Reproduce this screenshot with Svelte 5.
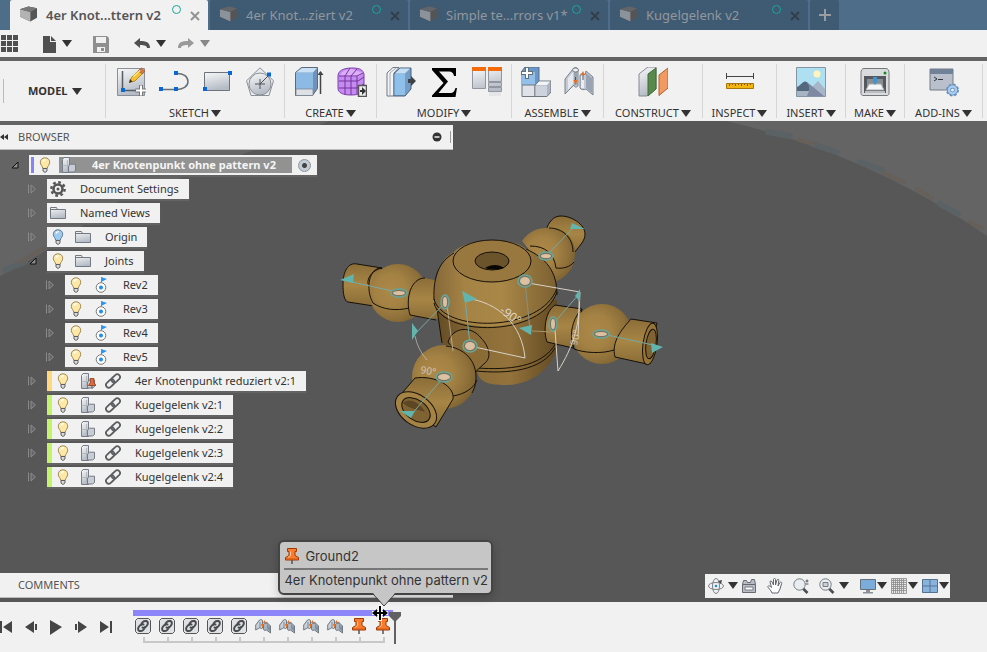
<script>
	const tabs = [
		{ title: '4er Knot...ttern v2' },
		{ title: '4er Knot...ziert v2' },
		{ title: 'Simple te...rrors v1*' },
		{ title: 'Kugelgelenk v2' }
	];
	let active = $state(0);

	const groups = [
		{ label: 'SKETCH', icons: ['sketch', 'arc', 'rect', 'polygon'] },
		{ label: 'CREATE', icons: ['extrude', 'form'] },
		{ label: 'MODIFY', icons: ['presspull', 'sigma', 'params'] },
		{ label: 'ASSEMBLE', icons: ['component', 'joint'] },
		{ label: 'CONSTRUCT', icons: ['plane'] },
		{ label: 'INSPECT', icons: ['measure'] },
		{ label: 'INSERT', icons: ['image'] },
		{ label: 'MAKE', icons: ['printer'] },
		{ label: 'ADD-INS', icons: ['scripts'] }
	];

	const tree = [
		{ label: 'Document Settings', level: 1, icons: ['gear'] },
		{ label: 'Named Views', level: 1, icons: ['folder'] },
		{ label: 'Origin', level: 1, icons: ['bulboff', 'folder'] },
		{ label: 'Joints', level: 1, icons: ['bulb', 'folder'], open: true },
		{ label: 'Rev2', level: 2, icons: ['bulb', 'rev'] },
		{ label: 'Rev3', level: 2, icons: ['bulb', 'rev'] },
		{ label: 'Rev4', level: 2, icons: ['bulb', 'rev'] },
		{ label: 'Rev5', level: 2, icons: ['bulb', 'rev'] },
		{ label: '4er Knotenpunkt reduziert v2:1', level: 1, icons: ['bulb', 'pinned', 'link'], stripe: 'orange' },
		{ label: 'Kugelgelenk v2:1', level: 1, icons: ['bulb', 'part', 'link'], stripe: 'green' },
		{ label: 'Kugelgelenk v2:2', level: 1, icons: ['bulb', 'part', 'link'], stripe: 'green' },
		{ label: 'Kugelgelenk v2:3', level: 1, icons: ['bulb', 'part', 'link'], stripe: 'green' },
		{ label: 'Kugelgelenk v2:4', level: 1, icons: ['bulb', 'part', 'link'], stripe: 'green' }
	];

	const navtools = [
		{ icon: 'orbit', menu: true },
		{ icon: 'lookat' },
		{ icon: 'hand' },
		{ icon: 'zoom' },
		{ icon: 'fit', menu: true },
		{ icon: 'display', menu: true },
		{ icon: 'grid', menu: true },
		{ icon: 'views', menu: true }
	];

	const playback = [
		{ name: 'start', d: 'M0 3h2v12H0zM12 3v12L3 9z' },
		{ name: 'back', d: 'M9 3v12L0 9zM10 6h2v6h-2z' },
		{ name: 'play', d: 'M0 2v15l12-8z' },
		{ name: 'forward', d: 'M3 3v12l9-6zM0 6h2v6H0z' },
		{ name: 'end', d: 'M0 3v12l9-6zM10 3h2v12h-2z' }
	];

	const features = ['linked', 'linked', 'linked', 'linked', 'linked', 'minijoint', 'minijoint', 'minijoint', 'minijoint', 'pin', 'pin'];

	// cx, cy, rx, ry of every joint origin
	const origins = [
		[399, 293, 8, 4],
		[445, 302, 4, 7],
		[470, 346, 7, 6],
		[444, 377, 8, 5],
		[525, 281, 7, 6],
		[546, 256, 7, 4],
		[553, 324, 4, 7],
		[601, 334, 8, 4]
	];
</script>

{#snippet big(name)}
	<svg class="big" viewBox="0 0 30 30" aria-hidden="true">
		{#if name === 'sketch'}
			<path d="M1.5 1.5h27v27h-27z" fill="url(#steel)" stroke="#8b9098" />
			<path d="M6.5 4v19.500H26" fill="none" stroke="#555b63" stroke-width="1.5" />
			<path d="M5 21h4v4H5z" fill="#0a67d8" />
			<path d="M13.5 15.5l2-5L24 2l4 3-9 9z" fill="#f5c02e" stroke="#a67b1c" stroke-width=".8" />
			<path d="M22 4l3.5-3 3.5 3-2.500 3z" fill="#d07a4c" stroke="#8e5a38" stroke-width=".6" />
			<path d="M13 16l1-4 2.500 2.500z" fill="#3d3225" />
			<path d="M17.5 9.500L24 3.500" stroke="#ffe583" stroke-width="1.5" />
			<path d="M25 18v11M19.5 23.5h11" stroke="#777" stroke-width="4" />
			<path d="M25 18.5v10M20 23.5h10" stroke="#fff" stroke-width="2" />
		{:else if name === 'arc'}
			<path d="M2 22.5h15M17 6.500c7-.5 12 3 12 8s-5 8-12 8" fill="none" stroke="#6a6f76" stroke-width="1.5" />
			<path d="M0 20h4v4H0zM15 20h4v4h-4zM15 4h4v4h-4z" fill="#0a67d8" />
		{:else if name === 'rect'}
			<path d="M2.5 5.5h25v18h-25z" fill="url(#steel)" stroke="#6f747b" />
			<path d="M1 20h4v4H1zM26 4h4v4h-4z" fill="#0a67d8" />
		{:else if name === 'polygon'}
			<path d="M15 .8l13.5 13L24 28.500H6L1.5 13.800z" fill="#e9ecef" stroke="#8b9097" />
			<circle cx="15" cy="17" r="11" fill="url(#steel)" stroke="#8b9097" />
			<path d="M15 12v10M10 17h10M15 17l8-8" stroke="#4d5259" />
			<path d="M22 5.5h4v4h-4z" fill="#0a67d8" />
		{:else if name === 'extrude'}
			<path d="M1.5 5.5l6-5h16v21l-5 7h-17z" fill="#6f93b8" stroke="#5d6a78" />
			<path d="M2 5.5h17v17H2z" fill="#8db9e5" />
			<path d="M2 5.5l6-4.500h15l-4 4.500z" fill="#c9e0f5" />
			<path d="M2 22h17v6.500H2z" fill="#dde1e6" stroke="#777f89" stroke-width=".7" />
			<path d="M26.5 27V5" stroke="#444" stroke-width="1.5" />
			<path d="M23.5 8l3-4 3 4z" fill="#444" />
		{:else if name === 'form'}
			<path d="M1 9c0-5 5-8 14-8 8 0 11 2 12 6v15c-1 4-5 6-13 6S1 26 1 21z" fill="#c58cf0" stroke="#7d3fb0" />
			<path d="M3 9c2-5 6-7 12-7l11 4-5 4z" fill="#dcaef8" />
			<path d="M2 14h19l6-4M2 21h18l7-4M2 9h18l6-3M8 28V9l5-8M14 28V9l6-7M20 27V9" fill="none" stroke="#74329f" />
			<path d="M21.5 18.5h8v11h-8z" fill="#eee" stroke="#555" stroke-width="1.5" />
			<path d="M23 23h2v-3l4 4-4 4v-3h-2z" fill="#333" />
		{:else if name === 'presspull'}
			<path d="M1 6l6-5.500h6L8 6v23H1z" fill="#f3f4f6" stroke="#717983" />
			<path d="M8 6.500L14 1h11v21l-6 7H8z" fill="#759dc7" stroke="#4b6179" />
			<path d="M8.5 7H19v21H8.500z" fill="#8fc0ea" />
			<path d="M9 6.500l5-5h10l-5 5z" fill="#c5dff5" />
			<path d="M4 29V6l6-5" fill="none" stroke="#a2a8b0" />
			<path d="M22 12h3V9l5 5-5 5v-3h-3z" fill="#3f4347" />
		{:else if name === 'sigma'}
			<path d="M3 1h24v8h-2c-.5-3-2-4.500-5-4.500h-10l9 10L9.500 26H21c3.500 0 4.500-2 5.500-5H28l-1.500 9H3v-1.500L14.500 16 3 3z" fill="#000" />
		{:else if name === 'params'}
			<path d="M.5 1.500h13v20H.5zM16.5 1.500h13v13h-13zM16.5 15.500h13v4h-13zM16.5 20.500h13v4h-13z" fill="url(#steel)" stroke="#9196a0" />
			<path d="M0 0h14v4H0zM16 0h14v4H16z" fill="#f56b0b" />
			<path d="M17 25h12v4H17z" fill="#d7d9dd" opacity=".5" />
		{:else if name === 'component'}
			<path d="M1 4l3-4h14v14l-4 4H1z" fill="#6897ca" stroke="#5d6e82" />
			<path d="M1 5h13v13H1z" fill="#92c0ea" />
			<path d="M1 18h13v11.500H1z" fill="#dfe3e9" stroke="#6f7680" />
			<path d="M14 18l4-4h12v11l-4 4.500H14z" fill="#aeb5c0" stroke="#6f7680" />
			<path d="M14.5 18.500H26v10.500H14.500z" fill="#cdd2dc" />
			<path d="M15 18l3-3.500h11L26 18z" fill="#f2f4f7" />
			<path d="M6 0v12M0 6h12" stroke="#666e77" stroke-width="4" />
			<path d="M6 1v10M1 6h10" stroke="#fff" stroke-width="2" />
		{:else if name === 'joint'}
			<path d="M1 12L9 2c1-2 5-2 5 1v16c-2 2-4 1-4-1l-9 9z" fill="#c3cad3" stroke="#7b828c" />
			<path d="M4 11l5-6v12l-5 6z" fill="#e5e9ee" />
			<path d="M10 4v14h3V4z" fill="#9aa5b2" />
			<ellipse cx="11.5" cy="3" rx="3" ry="2" fill="#f0f1f3" stroke="#777e87" />
			<path d="M16 8c1-2 4-2 5 0l1-4 7 6v18l-7-6c-2 1-5 1-6-1z" fill="#c3cad3" stroke="#7b828c" />
			<path d="M22 6l6 5v15l-6-5z" fill="#98a4b3" />
			<path d="M17 9h3v12h-3z" fill="#e9edf1" />
			<path d="M11.500 10v5M19 7v6" stroke="#555" />
			<path d="M9.500 13h4l-2 5zM17 8l2-4 2 4z" fill="#f26a1b" />
		{:else if name === 'plane'}
			<path d="M1 7l9-7h8v22l-9 7H1z" fill="url(#steel)" stroke="#848a92" />
			<path d="M10 7l8-6v21l-8 7z" fill="#578a4b" stroke="#426c38" />
			<path d="M21 8l9-7v20l-9 7.500z" fill="#f19a62" stroke="#b0622f" />
		{:else if name === 'measure'}
			<path d="M1.5 6v6M28.5 6v6M2 9.500h26" stroke="#444" fill="none" />
			<path d="M1.5 16.500h27v5h-27z" fill="#f2b50d" stroke="#a67709" />
			<path d="M4.5 17v2M7.5 17v1M10.5 17v2M13.5 17v1M16.5 17v2M19.5 17v1M22.5 17v2M25.5 17v1" stroke="#7f5b05" />
		{:else if name === 'image'}
			<path d="M.5 .5h29v29H.5z" fill="#aee0f2" stroke="#8595a3" />
			<circle cx="21" cy="7" r="3.500" fill="#fff5bd" />
			<path d="M14 22l8-8 7 8v7H14z" fill="#a7b5c9" />
			<path d="M1 21c3-1 6-7 10-6l17 14H1z" fill="#8089a3" />
			<path d="M1 20c3-1 5-5 8-5.500 3 0 2 3 4 4v5c-3 2-8 2-12 2z" fill="#53687c" />
			<path d="M1 24h12l-2 5H1z" fill="#a7b4c1" />
		{:else if name === 'printer'}
			<path d="M4 1.500h22c2 0 3 2 3 4v21c0 1-1 2-2 2H3c-1 0-2-1-2-2v-21c0-2 1-4 3-4z" fill="#d9dbdd" stroke="#747779" />
			<path d="M4 9h22v17H4z" fill="#55585c" />
			<path d="M7 12h16v11H7z" fill="#8a8d91" />
			<path d="M9 17h12l3 6H6z" fill="#f5f6f7" stroke="#a8aaad" />
			<path d="M13 10h4v5l-2 3-2-3z" fill="#3c95d1" />
			<circle cx="25" cy="6" r="1.500" fill="#178b20" />
			<path d="M5 24h20v2H5z" fill="#bbbdc0" />
		{:else if name === 'scripts'}
			<path d="M1 2h23v21H1z" fill="#b9c0cc" stroke="#747b86" />
			<path d="M1 2h23v5H1z" fill="#718198" />
			<path d="M5 10l3 2-3 2M9 12.500h5" fill="none" stroke="#31343a" />
			<circle cx="23.500" cy="23" r="5" fill="none" stroke="#6a93c0" stroke-width="3" stroke-dasharray="2.200 1.730" />
			<circle cx="23.500" cy="23" r="3.500" fill="#eef4fa" stroke="#5f89b6" stroke-width="4" />
			<circle cx="23.500" cy="23" r="3.500" fill="none" stroke="#a9cdf0" stroke-width="2.500" />
		{/if}
	</svg>
{/snippet}

{#snippet small(name)}
	<svg class="small" viewBox="0 0 16 16" aria-hidden="true">
		{#if name === 'bulb' || name === 'bulboff'}
			<path d="M8 .8c-3 0-4.700 2-4.700 4.600 0 2.300 2.200 3.600 2.500 6h4.400c.3-2.400 2.500-3.700 2.500-6C12.700 2.800 11 .8 8 .8z" fill={name === 'bulb' ? '#fde9a5' : '#9ecbee'} stroke={name === 'bulb' ? '#a18855' : '#607b98'} />
			<path d="M6 4.500c.5-1.500 1.500-2 3-2" fill="none" stroke="#fff" stroke-width="1.500" />
			<path d="M6 11.500h4v2.500l-2 1.500L6 14z" fill="#d8dadd" stroke="#555" stroke-width=".9" />
		{:else if name === 'gear'}
			<circle cx="8" cy="8" r="4.500" fill="none" stroke="#555" stroke-width="2.600" />
			<circle cx="8" cy="8" r="6.700" fill="none" stroke="#555" stroke-width="2.400" stroke-dasharray="2.700 2.560" />
			<circle cx="8" cy="8" r="1.500" fill="#555" />
		{:else if name === 'folder'}
			<path d="M.5 2.500h6l1 2h8v9H.5z" fill="url(#steel)" stroke="#737983" />
			<path d="M1 4.500h14" stroke="#737983" />
		{:else if name === 'rev'}
			<circle cx="8" cy="10.500" r="4.800" fill="#fff" stroke="#777" />
			<circle cx="8" cy="10.500" r="2" fill="#1b8ff0" />
			<path d="M8.500 5V.5" stroke="#777" />
			<path d="M8 0l6 2-6 3z" fill="#2a96ee" />
		{:else if name === 'part' || name === 'pinned'}
			<path d="M1.500 2.500l1.500-2h5.500v15h-7z" fill="url(#steel)" stroke="#757c86" />
			<path d="M1.500 8.500h6M6.500 3v12" stroke="#aeb4bd" stroke-width=".8" />
			<path d="M7.500 9l2-1.800h5v6.300l-2 1.500h-5z" fill="#c8cdd5" stroke="#757c86" />
			{#if name === 'pinned'}
				<path d="M10 5.500h4v4l2 3H8.500l2-3z" fill="#e3683a" stroke="#943716" stroke-width=".8" />
				<path d="M12 12.500v3" stroke="#555" />
			{/if}
		{:else if name === 'link'}
			<g transform="rotate(-43 8 8)" fill="none" stroke="#5b5d60" stroke-width="1.800">
				<rect x="-.5" y="5.200" width="9.500" height="5.600" rx="2.800" />
				<rect x="7" y="5.200" width="9.500" height="5.600" rx="2.800" />
			</g>
		{:else if name === 'linked'}
			<path d="M2.500 .5h11l2 2v11l-2 2h-11l-2-2v-11z" fill="#dfe1e4" stroke="#555" />
			<g fill="none" stroke="#4b4d50" stroke-width="2" stroke-linecap="round">
				<path d="M6 7c1-3 3-4.500 5.500-4 2 1 1.500 3 .5 4.500S9.500 10.500 7.500 9.500" />
				<path d="M10 9c-1 3-3 4.500-5.500 4-2-1-1.500-3-.5-4.500S6.500 5.500 8.500 6.500" />
			</g>
		{:else if name === 'minijoint'}
			<path d="M.7 7l3.800-5c1-1 3-.5 3 1v7c-1 1-2.500.5-2.500-.5L.7 12z" fill="#c9d0d8" stroke="#646c76" stroke-width=".9" />
			<path d="M8.500 6c.5-1 2-1 2.500 0l.5-2 4 4v7l-4-3c-1 .7-2.500.5-3-.5z" fill="#aab5c1" stroke="#646c76" stroke-width=".9" />
			<path d="M5 4v5" stroke="#7c8793" />
			<path d="M12 6v5l3 2V9z" fill="#8492a2" />
			<path d="M6 6h3l-1.500 4zM8 5l1.500-3L11 5z" fill="#f26a1b" />
		{:else if name === 'pin'}
			<path d="M3.500 .5h9v3H11v4l3.500 2v2.500h-13V9.500L5 7.500v-4H3.500z" fill="#fa7d2e" stroke="#9d3906" />
			<path d="M6.500 3.500v4L4 9.500" fill="none" stroke="#ffc794" />
			<path d="M2 11h12" stroke="#d45510" />
			<path d="M8 12v4" stroke="#555" stroke-width="1.500" />
		{:else if name === 'orbit'}
			<ellipse cx="8" cy="8" rx="7.500" ry="3.500" fill="none" stroke="#7c8188" />
			<ellipse cx="8" cy="8" rx="3.500" ry="7.500" fill="none" stroke="#7c8188" />
			<path d="M6 6h4v4H6z" fill="#f1f1f1" />
			<circle cx="8" cy="8" r="1.300" fill="#168df0" />
			<path d="M10 3l4-1-1 4z" fill="#444" />
		{:else if name === 'lookat'}
			<path d="M1.500 6.500l1-4h3l1 2h3l1-3h3l1 5v8h-13z" fill="#b9bdc3" stroke="#666b72" />
			<path d="M1.500 6.500h13" stroke="#666b72" />
			<path d="M4 9h8v3H4z" fill="#fff" stroke="#777c84" />
		{:else if name === 'hand'}
			<path d="M5 15C4 12 1 10 .8 8.500 1.500 7 3 8 4.500 9.500L3 4c0-1.500 1.500-1.500 2 0l1.500 3V1.500c0-1.300 2-1.300 2 0V7L10 2c.5-1.300 2-.8 1.800.5L11 8l2-3.500c.8-1 2-.3 1.700.8L13 11l-2 4z" fill="#fff" stroke="#62666d" />
		{:else if name === 'zoom' || name === 'fit'}
			<path d="M9.500 10l5 5" stroke="#4c4f53" stroke-width="2.600" />
			<circle cx="6.500" cy="6.500" r="5.700" fill="#e9edf1" stroke="#777c83" />
			{#if name === 'zoom'}
				<path d="M12.500 3h3M14 1.500v3M12.500 6h3" stroke="#555" />
			{:else}
				<path d="M4 4.500h5v4H4z" fill="#cdd1d6" stroke="#777c83" />
			{/if}
		{:else if name === 'display'}
			<path d="M.5 1.500h15v10H.5z" fill="#7cacd9" stroke="#64707d" />
			<path d="M6 12h4v2h3v1.500H3V14h3z" fill="#8a9097" />
		{:else if name === 'grid'}
			<path d="M.5 .5h15v15H.5zM2.500 1v14M4.500 1v14M6.500 1v14M8.500 1v14M10.500 1v14M12.500 1v14M1 2.500h14M1 4.500h14M1 6.500h14M1 8.500h14M1 10.500h14M1 12.500h14" fill="#e8e8e8" stroke="#888" stroke-width=".8" />
		{:else if name === 'views'}
			<path d="M.5 1.500h15v13H.5zM8 2v12M1 8h14" fill="#8ab3dc" stroke="#537395" />
		{/if}
	</svg>
{/snippet}

{#snippet caret()}<span class="caret"></span>{/snippet}

{#snippet expander(open)}
	<svg class="expander" viewBox="0 0 12 12" aria-hidden="true">
		{#if open}
			<path d="M9 3v6H3z" fill="#8d8d8d" stroke="#111" />
		{:else}
			<path d="M4 2l4.500 4L4 10z" fill="#666" stroke="#8b8b8b" />
			<path d="M1.500 1.500v9" stroke="#898989" />
		{/if}
	</svg>
{/snippet}

<svg class="defs" aria-hidden="true">
	<defs>
		<linearGradient id="steel" x1="0" y1="0" x2="0.3" y2="1">
			<stop offset="0" stop-color="#f7f8f9" />
			<stop offset="1" stop-color="#b6bcc6" />
		</linearGradient>
		<radialGradient id="brass" cx=".38" cy=".45" r=".68">
			<stop offset="0" stop-color="#ad8948" />
			<stop offset=".4" stop-color="#a48244" />
			<stop offset=".75" stop-color="#8d6f39" />
			<stop offset="1" stop-color="#755b2e" />
		</radialGradient>
		<linearGradient id="hub" x1="0" x2="1">
			<stop offset="0" stop-color="#86693a" />
			<stop offset=".25" stop-color="#a58345" />
			<stop offset=".55" stop-color="#a98747" />
			<stop offset="1" stop-color="#7b6031" />
		</linearGradient>
		<linearGradient id="drum" x1="0" x2="1">
			<stop offset="0" stop-color="#644b24" />
			<stop offset=".35" stop-color="#8c6d38" />
			<stop offset=".6" stop-color="#94733b" />
			<stop offset="1" stop-color="#614923" />
		</linearGradient>
		<linearGradient id="tube" x1="0" y1="0" x2="0" y2="1">
			<stop offset="0" stop-color="#8b6d38" />
			<stop offset=".5" stop-color="#a78545" />
			<stop offset="1" stop-color="#896c37" />
		</linearGradient>
	</defs>
</svg>

<div class="app">
	<nav class="tabs" aria-label="Documents">
		{#each tabs as tab, i}
			<button class="tab" class:active={i === active} onclick={() => (active = i)}>
				<svg class="cube" viewBox="0 0 18 16" aria-hidden="true">
					<path d="M0 3l9-3 9 2v10l-7 4-11-5z" fill="#555" />
					<path d="M0 3l11 3v10L0 11z" fill={i === active ? '#b3b3b3' : '#8b929a'} />
					<path d="M0 3l9-3 9 2-7 4z" fill={i === active ? '#777' : '#62666a'} />
				</svg>
				<span class="title">{tab.title}</span>
				<span class="status"></span>
				<svg class="close" viewBox="0 0 10 10" aria-hidden="true"><path d="M1 1l8 8M9 1L1 9" /></svg>
			</button>
		{/each}
		<button class="tab add" aria-label="New tab">
			<svg viewBox="0 0 12 12" aria-hidden="true"><path d="M6 0v12M0 6h12" stroke="#9a9c9f" stroke-width="2" /></svg>
		</button>
	</nav>

	<div class="quick">
		<button aria-label="Data panel">
			<svg viewBox="0 0 18 18"><path d="M1 0h5v5H1zM7 0h5v5H7zM13 0h5v5h-5zM1 6h5v5H1zM7 6h5v5H7zM13 6h5v5h-5zM1 12h5v5H1zM7 12h5v5H7zM13 12h5v5h-5z" fill="#505050" /></svg>
		</button>
		<button class="file" aria-label="File">
			<svg viewBox="0 0 18 18"><path d="M3 1h7v6h6v11H3zM11 1l5 5h-5z" fill="#505050" /></svg>{@render caret()}
		</button>
		<button class="save" aria-label="Save">
			<svg viewBox="0 0 18 18"><path d="M1 1h14l2 2v15H1zM4 2v6h10V2zM5 12v5h8v-5z" fill="#8f8f8f" fill-rule="evenodd" /><path d="M9 13h3v3H9z" fill="#8f8f8f" /></svg>
		</button>
		<button class="undo" aria-label="Undo">
			<svg viewBox="0 0 18 18"><path d="M1 8l6-5v3c6 0 10 1 10 7h-3c0-2-2-3-7-3v3z" fill="#505050" /></svg>{@render caret()}
		</button>
		<button class="redo" aria-label="Redo">
			<svg viewBox="0 0 18 18"><path d="M17 8l-6-5v3C5 6 1 7 1 13h3c0-2 2-3 7-3v3z" fill="#999" /></svg>{@render caret()}
		</button>
	</div>

	<header class="ribbon">
		<div class="workspace">
			<button>MODEL{@render caret()}</button>
		</div>
		{#each groups as group}
			<section>
				<div class="tools">
					{#each group.icons as icon}
						<button aria-label={icon}>{@render big(icon)}</button>
					{/each}
				</div>
				<button class="label">{group.label}{@render caret()}</button>
			</section>
		{/each}
	</header>

	<main>
		<svg class="canvas" viewBox="0 121 987 481" preserveAspectRatio="xMidYMin slice" aria-hidden="true">
			<path d="M0 121h987v481H0z" fill="#646464" />
			<path d="M0 276Q60 246 110 205L330 121H725C820 142 910 182 987 236V602H0z" fill="#575757" />
			<g fill="none" stroke-linecap="round">
				<path d="M768 132l22 4M812 144l25 8M860 162l22 8M940 204l18 10M5 270l20-8" stroke="#5b6265" stroke-width="6" />
				<path d="M799 140l14 4M884 173l20 9M917 189l15 9M970 222l12 6M20 262l24-14" stroke="#666059" stroke-width="4" />
			</g>

			<g stroke="#161108" stroke-linejoin="round" fill="none">
				<!-- rear arm -->
				<path d="M546 230c3-8 7-14 15-14 10 0 24 8 24 18 0 7-5 11-10 18z" fill="url(#tube)" />
				<path d="M522 241c8-11 18-14 31-13 13 1 22 12 22 25 0 15-8 24-20 29z" fill="url(#brass)" stroke="none" />
				<path d="M549 228c13 0 24 9 24 24M530 246c15 0 24 7 26 22M556 268c7 1 14-1 18-6" />
				<!-- left arm -->
				<path d="M357 264c-9-2-14 8-14 20 0 9 1 17 5 18l26 4 8-38z" fill="url(#tube)" />
				<path d="M424 278l15 3v38l-30-4z" fill="url(#tube)" stroke="none" />
				<circle cx="398" cy="293" r="29" fill="url(#brass)" stroke="none" />
				<path d="M424 278c-11 1-18 14-15 37l25 5 4-39z" fill="url(#tube)" stroke="none" />
				<path d="M382 268c-13-1-17 21-9 35 10 7 24 8 36 5M425 278c-14 0-20 20-15 37l26 5M382 268c-9 2-15 9-14 16" />
				<!-- hub -->
				<path d="M436 300h121l1 45c-6 25-28 40-52 40-18 0-26-3-29-13l-36-30-4-35z" fill="url(#drum)" stroke="none" />
				<path d="M434 303c0-29 8-46 20-51 12-14 58-16 72-3 19 8 31 24 31 43-15 45-112 43-123 11z" fill="url(#hub)" stroke="none" />
				<path d="M434 303c8 34 107 35 123-11M434 299c8 34 108 34 123-11M437 309l5 34M477 368c30 2 65 0 79-25M476 371c31 3 66 0 79-23M434 300c-1-25 6-39 20-47M526 249c20 9 31 22 31 46" />
				<ellipse cx="492" cy="261" rx="39" ry="21" fill="#997840" />
				<ellipse cx="492" cy="261" rx="17" ry="9" fill="#6b532b" />
				<path d="M485 268c6-4 14-4 19 0-5 2-13 2-19 0z" fill="#080602" stroke="none" />
				<!-- right arm -->
				<path d="M555 305l27 4-9 39-26-6c-4-11-2-31 8-37z" fill="url(#tube)" />
				<circle cx="602" cy="334" r="30" fill="url(#brass)" stroke="none" />
				<path d="M582 309c-11 11-13 29-8 40 10 4 28 5 40 1" />
				<path d="M631 319l26 4-10 41-32-7c-4-15 7-28 16-38z" fill="url(#tube)" />
				<ellipse cx="650" cy="344" rx="7" ry="21" transform="rotate(8 650 344)" fill="#967439" />
				<ellipse cx="651" cy="344" rx="5" ry="15" transform="rotate(8 651 344)" fill="#806332" />
				<!-- front arm -->
				<path d="M448 342c5-16 24-16 33-4 8 8 11 19 4 25l-12 11z" fill="#8b6c37" />
				<circle cx="444" cy="377" r="32" fill="url(#brass)" stroke="none" />
				<path d="M446 346c18 2 30 14 30 31 0 8-2 12-4 16" />
				<path d="M415 378l-18 21 39 28 17-28c2-13-18-24-38-21z" fill="url(#tube)" />
				<path d="M453 396c12-2 21-8 24-16" />
				<ellipse cx="416" cy="410" rx="23" ry="15" transform="rotate(36 416 410)" fill="#a48344" />
				<ellipse cx="416" cy="410" rx="16" ry="10" transform="rotate(36 416 410)" fill="#806332" />
				<path d="M403 403c5-6 17-1 22 9-8-3-16-3-22-9z" fill="#5d4623" stroke="none" />
			</g>

			<g fill="none" stroke="#d8d2c7">
				<path d="M470 346l55 12c-3-33-26-56-60-60M528 283l52 9-2 44M555 330l3 41c15-24 22-46 21-73" />
				<path d="M447 305l6 46M415 336q3 14 12 24" opacity=".6" />
				<path d="M532 331l22 1" stroke="#a8946a" />
			</g>
			<g fill="none" stroke="#74aaa6">
				<path d="M401 293l-58-13M443 305l-31 32M470 345l-5-47M443 378l-33 38M547 255l27-28M553 324l27-31M603 334l50 11" />
				<path d="M525 282l5 48" stroke="#8b9083" />
			</g>
			<path d="M340 280l14-6-1 9zM412 323l6 8-6 9zM462 291l15 8-12 4zM400 411h15l-4 7zM572 223l13 6h-15zM519 328l13-3-1 10zM580 289v13l-5-6zM651 343l12 4-11 6z" fill="#62b5af" />
			{#each origins as [cx, cy, rx, ry]}
				<ellipse {cx} {cy} {rx} {ry} fill="#7c7358" stroke="#66a69d" stroke-width="1.5" />
				<ellipse {cx} {cy} rx={rx - 2} ry={ry - 2} fill="#dcc0a4" />
			{/each}
			<g class="angles">
				<text transform="translate(499 312) rotate(36)">-90°</text>
				<text class="dim" transform="translate(577 346) rotate(-78)">90°</text>
				<text class="dim" transform="translate(420 373) rotate(10)">90°</text>
			</g>
		</svg>

		<aside class="browser">
			<div class="bar">
				<svg class="rewind" viewBox="0 0 10 8" aria-hidden="true"><path d="M4 1v6L0 4zM8 1v6L4 4z" fill="#333" /></svg>
				<span>BROWSER</span>
				<svg class="collapse" viewBox="0 0 20 14" aria-hidden="true"><circle cx="5" cy="7" r="4.500" fill="#333" /><path d="M2.500 7h5" stroke="#f1f1f1" stroke-width="1.500" /><path d="M18.500 1v12" stroke="#999" /></svg>
			</div>
			<ul>
				<li>
					{@render expander(true)}
					<div class="node root">
						<span class="stripe"></span>
						{@render small('bulb')}
						<span class="selected">{@render small('part')}<span class="name">4er Knotenpunkt ohne pattern v2</span></span>
						<input type="radio" name="component" checked aria-label="Activate component" />
					</div>
				</li>
				{#each tree as item}
					<li class:nested={item.level === 2} class="child">
						{@render expander(item.open)}
						<div class="node">
							{#if item.stripe}<span class="stripe {item.stripe}"></span>{/if}
							{#each item.icons as icon}{@render small(icon)}{/each}
							<span class="name">{item.label}</span>
						</div>
					</li>
				{/each}
			</ul>
		</aside>

		<div class="dock">
			<div class="bar comments">COMMENTS</div>
			<div class="navbar">
				{#each navtools as tool}
					<button class={tool.icon} aria-label={tool.icon}>{@render small(tool.icon)}{#if tool.menu}{@render caret()}{/if}</button>
				{/each}
			</div>
		</div>
	</main>

	<footer>
		<div class="playback">
			{#each playback as control}
				<button aria-label={control.name}><svg viewBox="0 0 18 18"><path d={control.d} fill="#454545" /></svg></button>
			{/each}
		</div>
		<div class="timeline">
			<div class="span"></div>
			<ol>
				{#each features as feature, i}
					<li>
						{@render small(feature)}
						{#if i === features.length - 1}
							<div class="tooltip" role="tooltip">
								<h4>{@render small('pin')}Ground2</h4>
								<p>4er Knotenpunkt ohne pattern v2</p>
								<svg viewBox="0 0 22 14" aria-hidden="true"><path d="M0 0h22L11 13z" fill="#c6c6c6" /><path d="M0 1l11 12L22 1" fill="none" stroke="#404040" /></svg>
							</div>
							<svg class="cursor" viewBox="0 0 16 16" aria-hidden="true"><path d="M8 0v16M0 8h16" stroke="#fff" stroke-width="4" /><path d="M8 1v14M2 8h12" stroke="#000" stroke-width="2" /><path d="M5 4L0 8l5 4zM11 4l5 4-5 4z" /></svg>
						{/if}
					</li>
				{/each}
			</ol>
			<svg class="marker" viewBox="0 0 12 32" aria-hidden="true"><path d="M0 0h12v4L7 9v23H5V9L0 4z" fill="#626262" /></svg>
		</div>
	</footer>
</div>

<style>
	:global(body) {
		margin: 0;
	}
	.app {
		display: flex;
		flex-direction: column;
		min-height: 100vh;
		overflow: hidden;
		background: #f1f1f1;
		color: #333;
		font: 11px/16px 'Noto Sans', 'Open Sans', sans-serif;
	}
	button {
		display: flex;
		align-items: center;
		padding: 0;
		border: 0;
		background: none;
		color: inherit;
		font: inherit;
	}
	svg {
		display: block;
		flex: none;
	}
	ul,
	ol {
		margin: 0;
		padding: 0;
		list-style: none;
	}
	.defs {
		position: absolute;
		width: 0;
		height: 0;
	}
	.caret {
		border: 5px solid transparent;
		border-top: 7px solid #333;
		border-bottom: 0;
	}
	.big {
		width: 30px;
		height: 30px;
	}
	.small {
		width: 16px;
		height: 16px;
	}

	/* document tabs */
	.tabs {
		display: flex;
		gap: 2px;
		height: 30px;
		padding-left: 10px;
		background: #4d6d88;
	}
	.tab {
		box-sizing: border-box;
		width: 198px;
		padding: 0 8px 0 10px;
		border-radius: 2px 2px 0 0;
		background: #3f5b73;
		color: #92979c;
		font-size: 13px;
	}
	.tab.active {
		background: #f1f1f1;
		color: #555;
		font-weight: 600;
	}
	.cube {
		width: 17px;
		height: 16px;
		margin: 0 9px 3px 0;
	}
	.title {
		flex: 1;
		text-align: left;
		white-space: nowrap;
	}
	.status {
		width: 7px;
		height: 7px;
		margin: 0 9px 12px 0;
		border: 1px solid #14a99a;
		border-radius: 50%;
	}
	.close {
		width: 10px;
		height: 10px;
		margin-top: 2px;
		stroke: #333e4a;
		stroke-width: 2;
	}
	.active .close {
		stroke: #939393;
	}
	.tab.add {
		justify-content: center;
		width: 29px;
		padding: 0;
	}
	.add svg {
		width: 12px;
	}

	.quick {
		display: flex;
		align-items: center;
		height: 27px;
		border-bottom: 4px solid #646464;
	}
	.quick svg {
		width: 18px;
		height: 18px;
	}
	.file {
		margin-left: 22px;
	}
	.file .caret {
		margin-left: 4px;
	}
	.save {
		margin-left: 20px;
	}
	.undo {
		margin-left: 23px;
	}
	.undo .caret,
	.redo .caret {
		margin-left: 5px;
	}
	.redo {
		margin-left: 11px;
	}
	.redo .caret {
		border-top-color: #888;
	}

	/* ribbon */
	.ribbon {
		display: grid;
		grid-template-columns: 106px 179px 92px 135px 92px 99px 74px 69px 59px 78px;
		height: 60px;
		font-size: 11px;
	}
	.workspace,
	.ribbon section {
		display: flex;
		margin: 3px 0;
		border-right: 1px solid #d6d6d6;
	}
	.workspace {
		align-items: center;
		font-weight: bold;
	}
	.workspace::before {
		content: '';
		width: 1px;
		height: 24px;
		margin: 0 24px 0 3px;
		background: #bbb;
	}
	.workspace button {
		gap: 5px;
	}
	.ribbon section {
		flex-direction: column;
		align-items: center;
		justify-content: space-between;
		padding-top: 3px;
	}
	.tools {
		display: flex;
		gap: 13px;
	}
	.label {
		gap: 2px;
		margin-bottom: -3px;
		white-space: nowrap;
	}

	/* viewport */
	main {
		position: relative;
		display: flex;
		flex: 1;
		flex-direction: column;
		justify-content: space-between;
		padding: 4px 0;
		background: #575757;
	}
	.canvas {
		position: absolute;
		top: 0;
		left: 0;
		width: 100%;
		height: 100%;
	}
	.angles {
		fill: #ded6ca;
		font-size: 12px;
	}
	.dim {
		font-size: 10px;
		opacity: 0.8;
	}
	.browser,
	.dock {
		position: relative;
	}
	.bar {
		display: flex;
		align-items: center;
		box-sizing: border-box;
		width: 453px;
		height: 25px;
		border-bottom: 1px solid #bcbcbc;
		background: #f1f1f1;
		color: #555;
	}
	.rewind {
		width: 10px;
		margin-right: 8px;
	}
	.collapse {
		width: 20px;
		margin-left: auto;
		margin-right: 1px;
	}
	.browser ul {
		display: flex;
		flex-direction: column;
		gap: 4px;
		padding-top: 5px;
	}
	.browser li {
		display: flex;
		align-items: center;
		gap: 8px;
		padding-left: 9px;
	}
	.browser .child {
		padding-left: 27px;
	}
	.browser .nested {
		padding-left: 45px;
	}
	.expander {
		width: 12px;
		height: 12px;
	}
	.node {
		display: flex;
		align-items: center;
		gap: 9px;
		height: 20px;
		padding: 0 10px 0 3px;
		background: #f1f1f1;
		box-shadow: 0 2px 1px #636363;
		font-size: 11px;
		white-space: nowrap;
	}
	.name {
		margin-left: 5px;
	}
	.stripe {
		width: 5px;
		height: 20px;
		margin: 0 -6px 0 -3px;
	}
	.orange {
		background: #ffd77d;
	}
	.green {
		background: #c3f36c;
	}
	.root {
		gap: 6px;
		padding: 0 6px 0 2px;
		font-weight: bold;
	}
	.root .stripe {
		width: 3px;
		height: 16px;
		margin: 0 -3px 0 0;
		background: #8883f5;
	}
	.selected {
		display: flex;
		align-items: center;
		gap: 10px;
		height: 16px;
		padding: 0 16px 0 2px;
		background: #929292;
		color: #f5f5f5;
	}
	.root input {
		appearance: none;
		width: 13px;
		height: 13px;
		margin: 0;
		border: 1px solid #8d949c;
		border-radius: 50%;
		background: radial-gradient(#444 0 2px, #c4cdd6 3px 6px);
	}

	.dock {
		display: flex;
		align-items: center;
		justify-content: space-between;
	}
	.comments {
		padding-left: 18px;
	}
	.navbar {
		display: flex;
		align-items: center;
		box-sizing: border-box;
		width: 245px;
		height: 24px;
		margin-right: 37px;
		padding-left: 3px;
		background: #f1f1f1;
	}
	.navbar button {
		margin-right: 10px;
		gap: 4px;
	}
	.navbar .orbit {
		margin-right: 3px;
	}
	.navbar .fit {
		margin-right: 11px;
	}
	.navbar .display,
	.navbar .grid,
	.navbar .views {
		gap: 1px;
		margin-right: 4px;
	}

	/* timeline */
	footer {
		display: flex;
		height: 50px;
		background: #f1f1f1;
	}
	.playback {
		display: flex;
		gap: 7px;
		width: 133px;
	}
	.playback svg {
		width: 18px;
		height: 18px;
	}
	.timeline {
		display: flex;
		flex-direction: column;
		width: 262px;
		padding-top: 8px;
		position: relative;
	}
	.span {
		height: 6px;
		margin-right: 2px;
		background: #8c86fa;
	}
	.timeline ol {
		display: flex;
		gap: 8px;
		padding: 2px 2px 0;
	}
	.timeline li {
		position: relative;
		height: 25px;
	}
	.timeline li::after {
		content: '';
		position: absolute;
		top: 19px;
		left: 8px;
		width: 24px;
		height: 4px;
		border-bottom: 2px solid #c8c8c8;
		border-left: 2px solid #c8c8c8;
	}
	.timeline li:last-child::after {
		width: 0;
	}
	.marker {
		position: absolute;
		top: 10px;
		right: -6px;
		width: 12px;
		height: 32px;
	}
	.tooltip {
		position: absolute;
		right: -102px;
		bottom: 48px;
		box-sizing: border-box;
		padding: 4px 3px 3px 4px;
		border: 2px solid #444;
		border-radius: 6px;
		background: #c6c6c6;
		box-shadow: 0 3px 10px #0003;
		color: #333;
		font: 13px/20px Inter, 'Liberation Sans', sans-serif;
		white-space: nowrap;
	}
	.tooltip h4 {
		display: flex;
		align-items: center;
		gap: 5px;
		margin: 0;
		padding-bottom: 2px;
		border-bottom: 2px solid #777;
		font: inherit;
	}
	.tooltip p {
		margin: 0;
	}
	.tooltip > svg {
		position: absolute;
		top: 100%;
		left: 93px;
		width: 22px;
		height: 14px;
	}
	.cursor {
		position: absolute;
		top: -13px;
		left: -3px;
		width: 16px;
		height: 16px;
	}
</style>
